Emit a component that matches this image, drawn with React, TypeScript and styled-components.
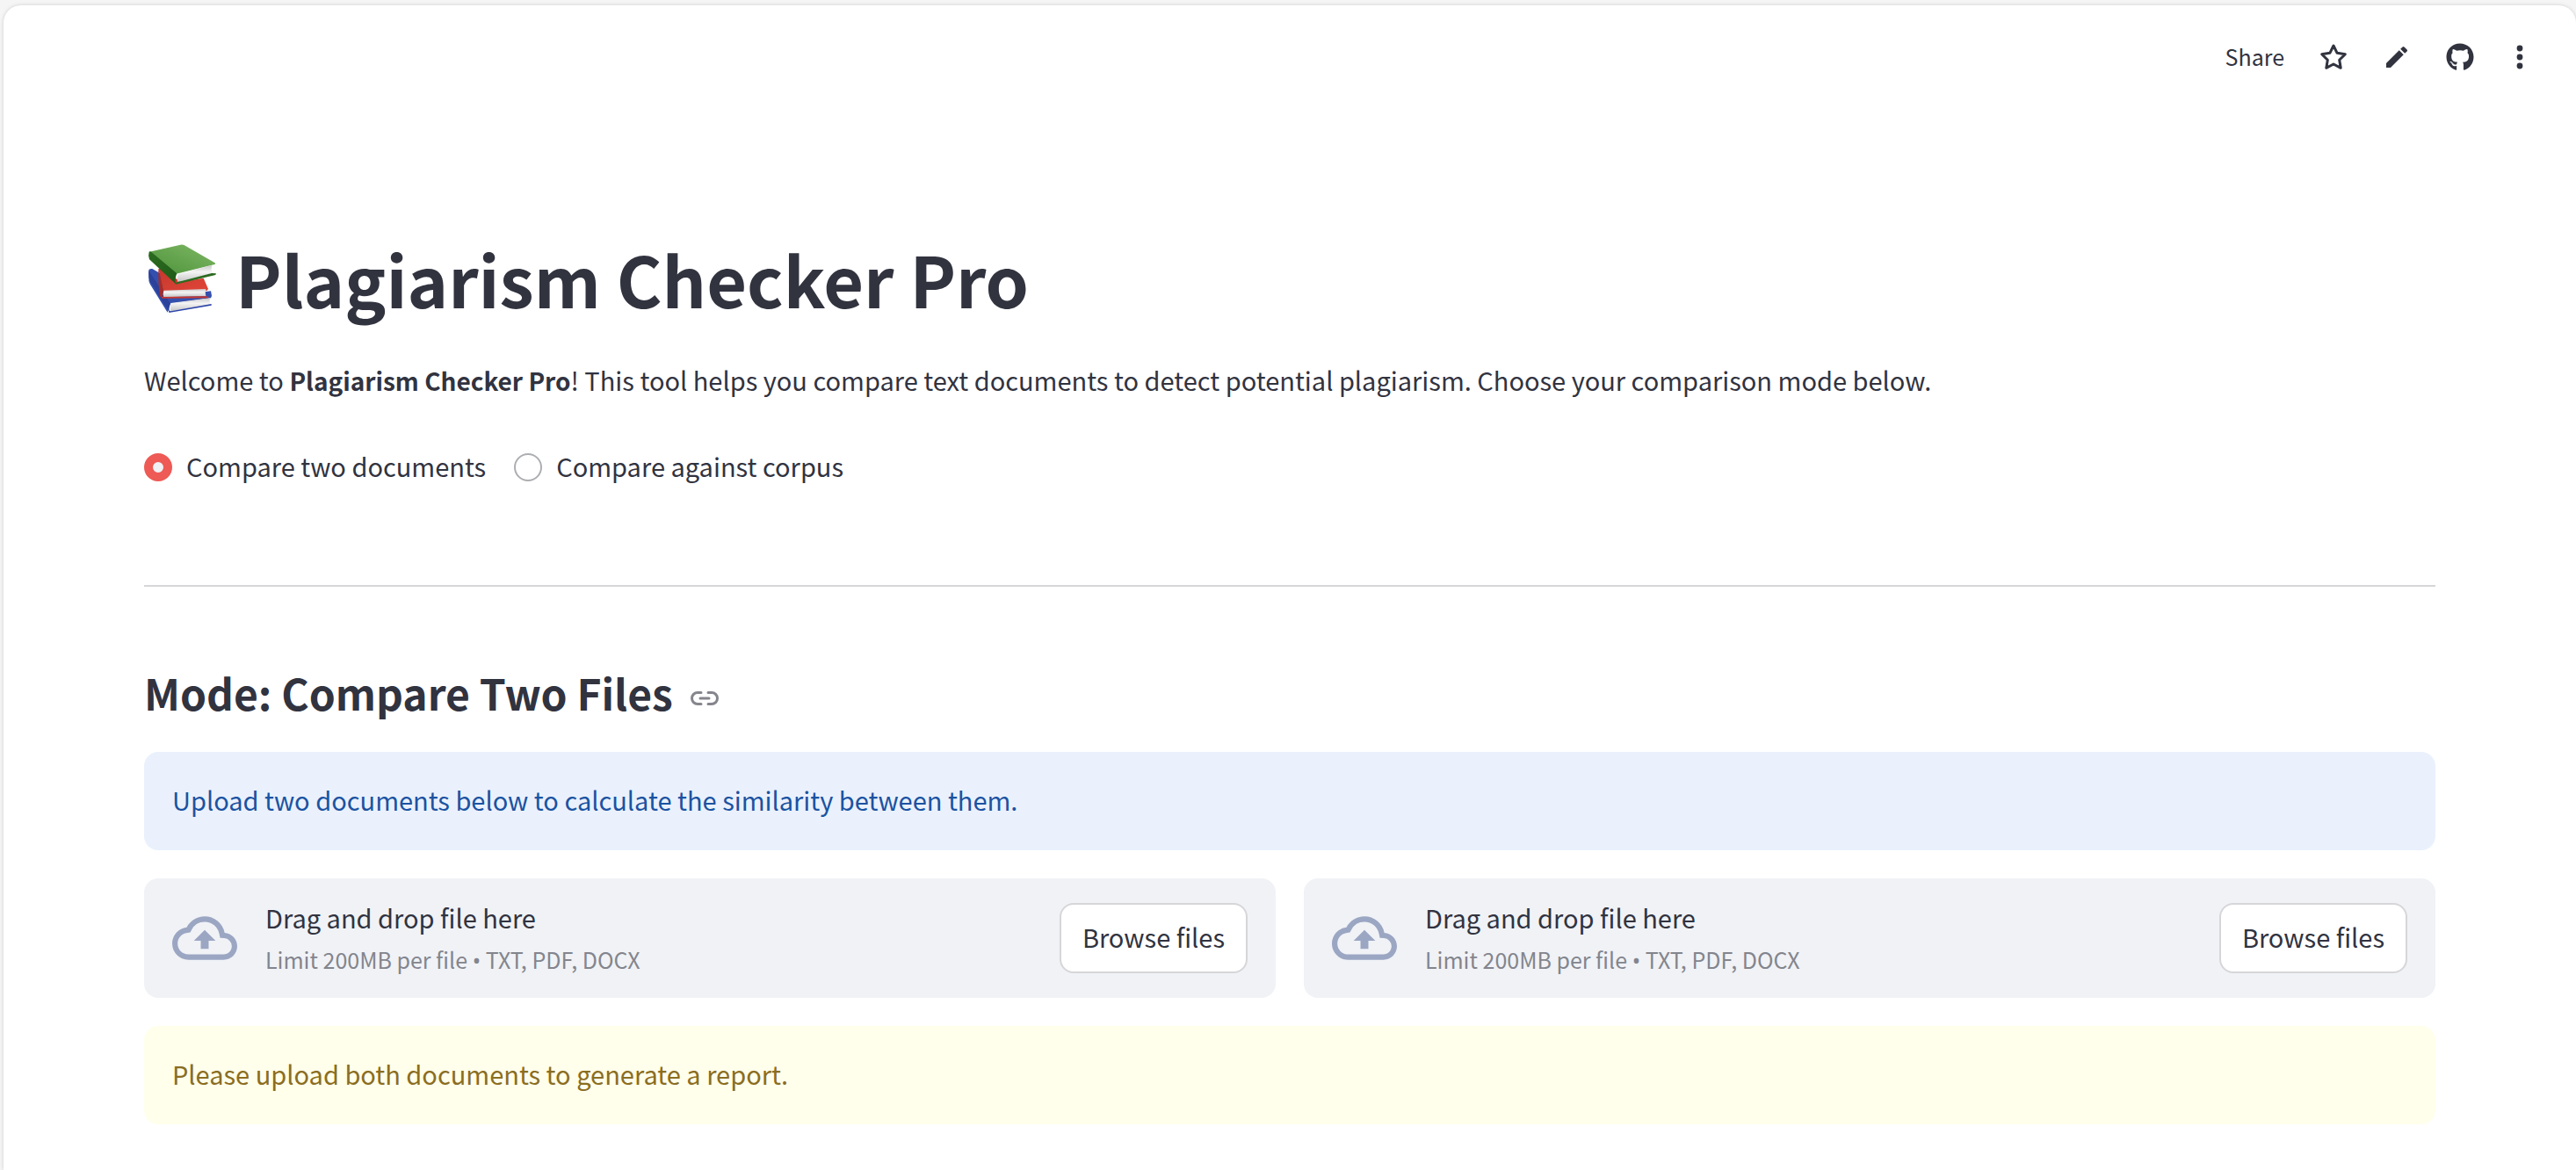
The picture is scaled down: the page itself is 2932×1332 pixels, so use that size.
import React, { useId, useState } from "react";
import styled, { createGlobalStyle } from "styled-components";
import { MdOutlineCloudUpload, MdEdit } from "react-icons/md";
import { FaGithub } from "react-icons/fa";

const ink = "#31333f";

const GlobalStyle = createGlobalStyle`
  * { box-sizing: border-box; }
  body {
    margin: 0;
    background: #f5f5f5;
    color: ${ink};
    font-family: "Noto Sans CJK SC", "Noto Sans", sans-serif;
    font-size: 29px;
    line-height: 52px;
  }
  button, input { font: inherit; color: inherit; }
`;

const Shell = styled.div`
  min-height: 100vh;
  padding: 6px 0 0 4px;
`;

const Sheet = styled.div`
  min-height: calc(100vh - 6px);
  background: #fff;
  border-radius: 20px 20px 0 0;
  box-shadow: 0 0 4px rgba(0, 0, 0, 0.16);
`;

const Toolbar = styled.header`
  display: flex;
  justify-content: flex-end;
  align-items: center;
  height: 118px;
  padding: 0 50px;
  gap: 36px;
`;

const ToolButton = styled.button`
  display: flex;
  align-items: center;
  justify-content: center;
  min-width: 28px;
  height: 56px;
  padding: 0;
  border: 0;
  background: none;
  cursor: pointer;
`;

const ShareButton = styled(ToolButton)`
  padding: 0 2px 2px 0;
  font-size: 25px;
  line-height: 36px;
`;

const IconButton = styled(ToolButton)`
  width: 36px;
`;

const Main = styled.main`
  display: flex;
  flex-direction: column;
  padding: 122px 160px 52px;
`;

const Title = styled.h1`
  display: flex;
  align-items: center;
  gap: 20px;
  margin: 0;
  padding: 18px 0 36px;
  font-size: 79px;
  line-height: 106px;
  font-weight: 700;
`;

const Intro = styled.p`
  margin: 0 0 48px;
`;

const Strong = styled.strong`
  font-size: 28px;
  line-height: 28px;
`;

const Modes = styled.fieldset`
  display: flex;
  gap: 32px;
  margin: 0;
  padding: 0;
  border: 0;
`;

const ModeLabel = styled.label`
  display: flex;
  align-items: center;
  gap: 16px;
  cursor: pointer;
`;

const ModeText = styled.span`
  padding-bottom: 4px;
  line-height: 48px;
`;

const Radio = styled.input`
  appearance: none;
  width: 32px;
  height: 32px;
  margin: 0;
  border: 2px solid #adaeb2;
  border-radius: 50%;
  background: #fff;
  &:checked {
    border: 10px solid #ee5a55;
    background: #f0f2f6;
  }
`;

const Rule = styled.hr`
  width: 100%;
  height: 2px;
  margin: 108px 0 80px;
  border: 0;
  background: #d6d6d9;
`;

const Heading = styled.h3`
  display: flex;
  align-items: center;
  gap: 20px;
  margin: 0;
  padding: 6px 0 34px;
  font-size: 48px;
  line-height: 68px;
  font-weight: 700;
`;

const Anchor = styled.a`
  display: flex;
  padding-top: 14px;
  color: #85868d;
`;

const Stack = styled.div`
  display: flex;
  flex-direction: column;
  gap: 32px;
`;

const Notice = styled.div<{ $tone: "info" | "warning" }>`
  padding: 28px 32px 32px;
  border-radius: 16px;
  background: ${(p) => (p.$tone === "info" ? "#eaf1fd" : "#ffffeb")};
  color: ${(p) => (p.$tone === "info" ? "#1b53a1" : "#8b6d21")};
`;

const Columns = styled.div`
  display: grid;
  grid-template-columns: 1fr 1fr;
  gap: 32px;
`;

const DropZone = styled.section`
  display: flex;
  align-items: center;
  gap: 32px;
  min-height: 136px;
  padding: 0 32px;
  border-radius: 16px;
  background: #f0f2f6;
`;

const DropIcon = styled(MdOutlineCloudUpload)`
  flex: none;
  width: 74px;
  height: 74px;
  color: #9ba6c3;
`;

const DropText = styled.div`
  display: flex;
  flex-direction: column;
  flex: 1;
  line-height: 48px;
`;

const Hint = styled.small`
  color: #83858d;
  font-size: 25px;
`;

const Bullet = styled.span`
  font-family: "Noto Sans", sans-serif;
`;

const Browse = styled.button`
  height: 80px;
  padding: 0 24px 4px;
  border: 2px solid #d6d6d9;
  border-radius: 16px;
  background: #fff;
  cursor: pointer;
`;

function Books() {
  return (
    <svg width="84" height="84" viewBox="12 15 252 252" aria-hidden="true">
      <defs>
        <linearGradient id="greenCover" x1="0" y1="1" x2="1" y2="0">
          <stop offset="0" stopColor="#4c9239" />
          <stop offset="1" stopColor="#80b866" />
        </linearGradient>
        <linearGradient id="greenSpine" x1="0" y1="0" x2="1" y2="1">
          <stop offset="0" stopColor="#2c6b20" />
          <stop offset="1" stopColor="#1f5b18" />
        </linearGradient>
        <linearGradient id="redCover" x1="0" y1="0" x2="1" y2="1">
          <stop offset="0" stopColor="#c5382e" />
          <stop offset="1" stopColor="#e04537" />
        </linearGradient>
        <linearGradient id="pages" x1="0" y1="0" x2="0" y2="1">
          <stop offset="0" stopColor="#c9c9cb" />
          <stop offset="0.4" stopColor="#f4f4f4" />
          <stop offset="1" stopColor="#c4c4c6" />
        </linearGradient>
      </defs>

      <path d="M28 112q4-5 12-4l35 20 60 70 105-14 3 16-3 8-138 19-10 30-60-97q-5-8-4-20Z" fill="#3450ae" />
      <path d="M28 114 101 226q-6 14-3 30L32 150q-6-14-4-36Z" fill="#2b419a" />
      <path d="m103 225 134-17q-3 12 0 22l-134 23q-4-14 0-28Z" fill="url(#pages)" />
      <path d="m96 250 6 3 140-25v5L97 258Z" fill="#2c45a8" />

      <path d="M61 108q6-4 16 4l60 40 78-12 16 37-5 6-148 1Z" fill="url(#redCover)" />
      <path d="M61 108 78 182q-4 14-3 26l-9-6q-6-40-5-94Z" fill="#a82c28" />
      <path d="m79 182 144-5q-4 12 0 24l-144 4q-4-10 0-23Z" fill="url(#pages)" />
      <path d="m69 203 8 1 144-2 11 1-1 5-157 1Z" fill="#c8372f" />

      <path d="M30 50 136 26q8-2 14 2l104 60q4 3-1 5l-131 32Z" fill="url(#greenCover)" />
      <path d="M29 50q-4 12 1 26l90 84q-4-18 4-36L36 50q-5-3-7 0Z" fill="url(#greenSpine)" />
      <path d="m129 126 114-30q-3 14 1 27l-117 30q-4-15 2-27Z" fill="url(#pages)" />
      <path d="m118 156 9-3 116-30 15 1-2 5-136 32Z" fill="#2b6a20" />
    </svg>
  );
}

function StarIcon() {
  return (
    <svg width="36" height="36" viewBox="0 0 36 36" fill="none" stroke="currentColor" strokeWidth="3" strokeLinejoin="round" aria-hidden="true">
      <path d="M18 5 22.100 13.300 31.300 14.700 24.700 21.200 26.200 30.300 18 26 9.800 30.300 11.300 21.200 4.700 14.700 13.900 13.300Z" />
    </svg>
  );
}

function DotsIcon() {
  return (
    <svg width="28" height="40" viewBox="0 0 28 40" fill="currentColor" aria-hidden="true">
      <circle cx="14" cy="10" r="3.4" />
      <circle cx="14" cy="20" r="3.4" />
      <circle cx="14" cy="30" r="3.4" />
    </svg>
  );
}

function LinkIcon() {
  return (
    <svg width="32" height="16" viewBox="0 0 32 16" fill="none" stroke="currentColor" strokeWidth="3" strokeLinecap="round" aria-hidden="true">
      <path d="M12 1.500H8a6.500 6.500 0 0 0 0 13h4M20 1.500h4a6.500 6.500 0 0 1 0 13h-4M11 8h10" />
    </svg>
  );
}

function Uploader() {
  return (
    <DropZone>
      <DropIcon aria-hidden="true" />
      <DropText>
        <span>Drag and drop file here</span>
        <Hint>Limit 200MB per file <Bullet>•</Bullet> TXT, PDF, DOCX</Hint>
      </DropText>
      <Browse type="button">Browse files</Browse>
    </DropZone>
  );
}

const modes = ["Compare two documents", "Compare against corpus"];

export default function App() {
  const [mode, setMode] = useState(0);
  const id = useId();
  return (
    <Shell>
      <GlobalStyle />
      <Sheet>
        <Toolbar>
          <ShareButton type="button">Share</ShareButton>
          <IconButton type="button" aria-label="Favorite"><StarIcon /></IconButton>
          <IconButton type="button" aria-label="Edit"><MdEdit size={32} /></IconButton>
          <IconButton type="button" aria-label="View source"><FaGithub size={32} /></IconButton>
          <ToolButton type="button" aria-label="Menu"><DotsIcon /></ToolButton>
        </Toolbar>
        <Main>
          <Title><Books />Plagiarism Checker Pro</Title>
          <Intro>
            Welcome to <Strong>Plagiarism Checker Pro</Strong>! This tool helps you compare text documents to detect potential plagiarism. Choose your comparison mode below.
          </Intro>
          <Modes>
            {modes.map((label, i) => (
              <ModeLabel key={label} htmlFor={`${id}-${i}`}>
                <Radio id={`${id}-${i}`} type="radio" name="mode" checked={mode === i} onChange={() => setMode(i)} />
                <ModeText>{label}</ModeText>
              </ModeLabel>
            ))}
          </Modes>
          <Rule />
          <Heading id="mode">
            Mode: Compare Two Files
            <Anchor href="#mode" aria-label="Link to heading"><LinkIcon /></Anchor>
          </Heading>
          <Stack>
            <Notice $tone="info">Upload two documents below to calculate the similarity between them.</Notice>
            <Columns>
              <Uploader />
              <Uploader />
            </Columns>
            <Notice $tone="warning">Please upload both documents to generate a report.</Notice>
          </Stack>
        </Main>
      </Sheet>
    </Shell>
  );
}
